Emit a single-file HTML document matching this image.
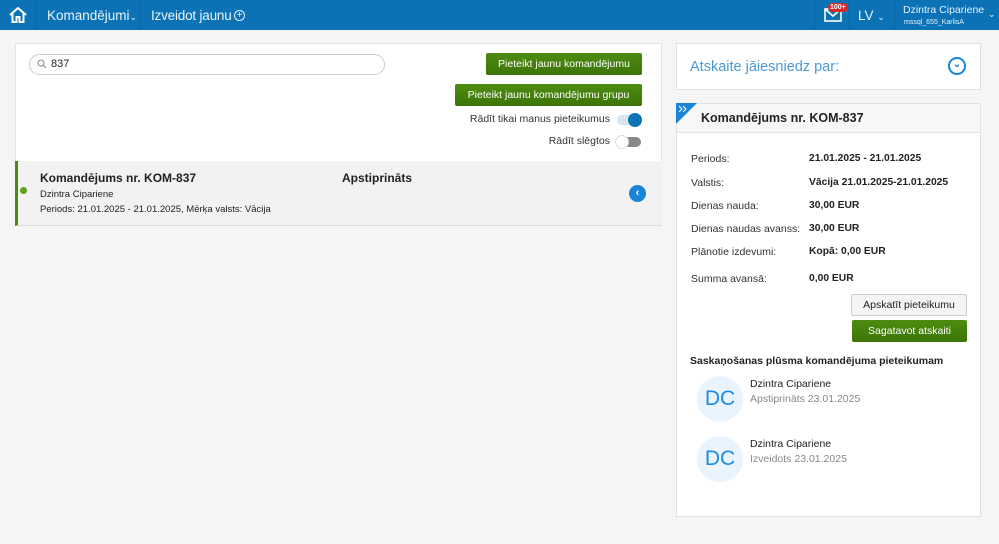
<!DOCTYPE html>
<html><head><meta charset="utf-8"><style>
*{box-sizing:border-box;margin:0;padding:0}
body{width:999px;height:544px;background:#f5f5f5;font-family:"Liberation Sans",sans-serif;color:#222;position:relative;overflow:hidden;font-size:11px}
.nav{position:absolute;left:0;top:0;width:999px;height:30px;background:#0b72b5;color:#e8f2fa}
.abs{position:absolute}
.panel{position:absolute;background:#fff;border:1px solid #e2e2e2}
.btn{position:absolute;background:linear-gradient(#4c8c10,#3d7408);color:#fff;border-radius:2px;font-size:10.5px;text-align:center;line-height:22px}
.tog{position:absolute;width:24px;height:10px;border-radius:5px}
.knob{position:absolute;width:14px;height:14px;border-radius:7px;top:-2px}
.lbl{position:absolute;left:14px;color:#333;font-size:10.5px}
.val{position:absolute;left:132px;font-weight:bold;font-size:10.3px}
.av{position:absolute;width:46px;height:46px;border-radius:23px;background:#eaf4fe;color:#1a8ce8;font-size:21px;text-align:center;line-height:46px}
</style></head><body>
<div class="nav">
 <div class="abs" style="left:0;top:0;width:36px;height:30px;border-right:1px solid #0a66a3"></div>
 <svg class="abs" style="left:9px;top:7px" width="18" height="16" viewBox="0 0 18 16"><path d="M1 8 L9 1 L17 8 M3.5 6 V15 H7.5 V10 H10.5 V15 H14.5 V6" fill="none" stroke="#fff" stroke-width="2"/></svg>
 <div class="abs" style="left:47px;top:8px;font-size:13.5px">Komandējumi<span style="font-size:9px">⌄</span></div>
 <div class="abs" style="left:140px;top:0;width:1px;height:30px;background:#0a66a3"></div>
 <div class="abs" style="left:151px;top:8px;font-size:13.5px;letter-spacing:-0.2px">Izveidot jaunu</div>
 <div class="abs" style="left:234px;top:10px;width:11px;height:11px;border:1px solid #e8f2fa;border-radius:6px;font-size:10px;line-height:9px;text-align:center">+</div>
 <div class="abs" style="left:814px;top:0;width:1px;height:30px;background:#0a66a3"></div>
 <svg class="abs" style="left:824px;top:8px" width="18" height="14" viewBox="0 0 18 14"><rect x="1" y="1" width="16" height="12" fill="none" stroke="#fff" stroke-width="1.6"/><path d="M1 1 L9 8 L17 1" fill="none" stroke="#fff" stroke-width="1.6"/></svg>
 <div class="abs" style="left:828px;top:3px;background:#d62a2a;color:#fff;font-size:7px;font-weight:bold;border-radius:5px;padding:0 2px;line-height:9px">100+</div>
 <div class="abs" style="left:849px;top:0;width:1px;height:30px;background:#0a66a3"></div>
 <div class="abs" style="left:858px;top:8px;font-size:13.5px">LV <span style="font-size:9px">⌄</span></div>
 <div class="abs" style="left:894px;top:0;width:1px;height:30px;background:#0a66a3"></div>
 <div class="abs" style="left:903px;top:4px;font-size:10.5px">Dzintra Cipariene</div>
 <div class="abs" style="left:904px;top:19px;font-size:7px">mssql_655_KarlisA</div>
 <div class="abs" style="left:988px;top:9px;font-size:9px">⌄</div>
</div>

<div class="panel" style="left:15px;top:43px;width:647px;height:183px"></div>
<div class="abs" style="left:29px;top:54px;width:356px;height:21px;border:1px solid #ccc;border-radius:11px;background:#fff"></div>
<svg class="abs" style="left:37px;top:59px" width="10" height="10" viewBox="0 0 10 10"><circle cx="4" cy="4" r="3" fill="none" stroke="#888"/><path d="M6 6 L9 9" stroke="#888"/></svg>
<div class="abs" style="left:51px;top:58px;font-size:11px">837</div>
<div class="btn" style="left:486px;top:53px;width:156px;height:22px">Pieteikt jaunu komandējumu</div>
<div class="btn" style="left:455px;top:84px;width:187px;height:22px">Pieteikt jaunu komandējumu grupu</div>
<div class="abs" style="left:380px;top:113px;width:230px;text-align:right;color:#333;font-size:10.5px">Rādīt tikai manus pieteikumus</div>
<div class="tog" style="left:617px;top:115px;background:#d8e4ee"><div class="knob" style="left:11px;background:#0b72b5"></div></div>
<div class="abs" style="left:380px;top:135px;width:230px;text-align:right;color:#333;font-size:10.5px">Rādīt slēgtos</div>
<div class="tog" style="left:617px;top:137px;background:#888"><div class="knob" style="left:-2px;background:#fff;border:1px solid #ddd"></div></div>
<div class="abs" style="left:15px;top:161px;width:647px;height:65px;background:#f2f2f2;border-left:3px solid #4a8a12;border-bottom:1px solid #ddd"></div>
<div class="abs" style="left:20px;top:187px;width:7px;height:7px;border-radius:4px;background:#5ea11a"></div>
<div class="abs" style="left:40px;top:171px;font-size:12px;font-weight:bold">Komandējums nr. KOM-837</div>
<div class="abs" style="left:40px;top:189px;font-size:9.5px">Dzintra Cipariene</div>
<div class="abs" style="left:40px;top:204px;font-size:9.5px">Periods: 21.01.2025 - 21.01.2025, Mērķa valsts: Vācija</div>
<div class="abs" style="left:342px;top:171px;font-size:12px;font-weight:bold">Apstiprināts</div>
<div class="abs" style="left:629px;top:185px;width:17px;height:17px;border-radius:9px;background:#1a85d6;color:#fff;font-size:11px;font-weight:bold;text-align:center;line-height:16px">‹</div>

<div class="panel" style="left:676px;top:43px;width:305px;height:47px"></div>
<div class="abs" style="left:690px;top:59px;font-size:14.5px;color:#4a9ad6">Atskaite jāiesniedz par:</div>
<div class="abs" style="left:948px;top:57px;width:18px;height:18px;border:2px solid #1a85d6;border-radius:9px;color:#1a85d6;font-size:10px;text-align:center;line-height:11px;font-weight:bold">⌄</div>

<div class="panel" style="left:676px;top:103px;width:305px;height:414px">
 <div class="abs" style="left:0;top:0;width:303px;height:29px;background:#f7f7f7;border-bottom:1px solid #e2e2e2"></div>
 <svg class="abs" style="left:-1px;top:-1px" width="22" height="22"><path d="M0 0 H21 L0 21 Z" fill="#1a85d6"/><path d="M3 3 L6 6 L3 9 M7 3 L10 6 L7 9" stroke="#fff" fill="none"/></svg>
 <div class="abs" style="left:24px;top:7px;font-size:12.5px;font-weight:bold">Komandējums nr. KOM-837</div>
 <div class="lbl" style="top:49px">Periods:</div><div class="val" style="top:49px">21.01.2025 - 21.01.2025</div>
 <div class="lbl" style="top:73px">Valstis:</div><div class="val" style="top:73px">Vācija 21.01.2025-21.01.2025</div>
 <div class="lbl" style="top:96px">Dienas nauda:</div><div class="val" style="top:96px">30,00 EUR</div>
 <div class="lbl" style="top:119px">Dienas naudas avanss:</div><div class="val" style="top:119px">30,00 EUR</div>
 <div class="lbl" style="top:142px">Plānotie izdevumi:</div><div class="val" style="top:142px">Kopā: 0,00 EUR</div>
 <div class="lbl" style="top:169px">Summa avansā:</div><div class="val" style="top:169px">0,00 EUR</div>
 <div class="abs" style="left:174px;top:190px;width:116px;height:22px;background:#f4f4f4;border:1px solid #ccc;border-radius:2px;text-align:center;line-height:20px;font-size:10.5px">Apskatīt pieteikumu</div>
 <div class="btn" style="left:175px;top:216px;width:115px;height:22px">Sagatavot atskaiti</div>
 <div class="abs" style="left:13px;top:251px;font-weight:bold;font-size:10.5px">Saskaņošanas plūsma komandējuma pieteikumam</div>
 <div class="av" style="left:20px;top:272px">DC</div>
 <div class="abs" style="left:73px;top:274px;font-size:10.5px">Dzintra Cipariene</div>
 <div class="abs" style="left:73px;top:289px;color:#888;font-size:10.5px">Apstiprināts 23.01.2025</div>
 <div class="av" style="left:20px;top:332px">DC</div>
 <div class="abs" style="left:73px;top:334px;font-size:10.5px">Dzintra Cipariene</div>
 <div class="abs" style="left:73px;top:349px;color:#888;font-size:10.5px">Izveidots 23.01.2025</div>
</div>
</body></html>
